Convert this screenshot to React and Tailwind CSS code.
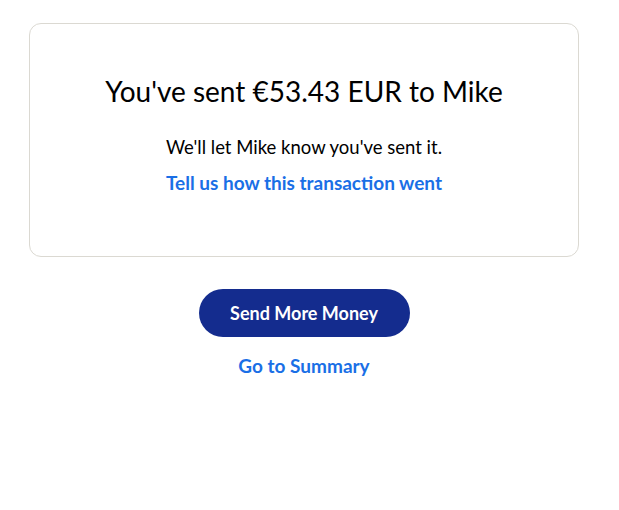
import React from 'react';

const App = () => {
  return (
    <div className="w-[608px] px-[29px] pt-[23px] font-['Lato',sans-serif] text-[#000]">
      {/* Confirmation card */}
      <div className="border border-[#dbd9d2] rounded-[12px] pt-[49px] pb-[61px] px-6 flex flex-col items-center">
        <h1 className="text-[28px] leading-[36px] font-normal text-black">
          You've sent €53.43 EUR to Mike
        </h1>
        <p className="mt-[26px] text-[18.5px] leading-[24px] text-black">
          We'll let Mike know you've sent it.
        </p>
        <a href="#" className="mt-[12px] text-[19px] leading-[24px] font-bold text-[#1a6fe6]">
          Tell us how this transaction went
        </a>
      </div>

      {/* Actions */}
      <div className="mt-[32px] flex flex-col items-center">
        <button className="w-[211px] h-[48px] rounded-full bg-[#142c8e] text-white text-[18px] font-bold">
          Send More Money
        </button>
        <a href="#" className="mt-[17px] text-[19px] leading-[24px] font-bold text-[#1a6fe6]">
          Go to Summary
        </a>
      </div>
    </div>
  );
};

export default App;
